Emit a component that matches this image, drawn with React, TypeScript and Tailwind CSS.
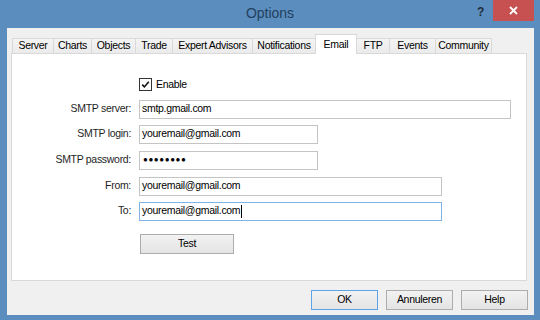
import React from "react";

type Tab = { label: string; width: string; selected?: boolean };

const tabs: Tab[] = [
  { label: "Server", width: "w-[41px]" },
  { label: "Charts", width: "w-[38px]" },
  { label: "Objects", width: "w-[44px]" },
  { label: "Trade", width: "w-[37px]" },
  { label: "Expert Advisors", width: "w-[80px]" },
  { label: "Notifications", width: "w-[63px]" },
  { label: "Email", width: "w-[42px]", selected: true },
  { label: "FTP", width: "w-[32px]" },
  { label: "Events", width: "w-[46px]" },
  { label: "Community", width: "w-[57px]" },
];

function TabStrip() {
  return (
    <div className="flex items-end h-[19px] pl-[1px]">
      {tabs.map((tab, i) => {
        const afterSelected = i > 0 && tabs[i - 1].selected;
        const isLast = i === tabs.length - 1;
        if (tab.selected) {
          return (
            <div
              key={tab.label}
              className={`${tab.width} h-[20px] -mb-px relative z-10 bg-white border-t border-l border-r border-[#d9d9d9] flex justify-center pt-[2px]`}
            >
              {tab.label}
            </div>
          );
        }
        return (
          <div
            key={tab.label}
            className={`${tab.width} h-[15px] border-t border-[#d9d9d9] bg-gradient-to-b from-[#f4f4f4] to-[#ebebeb] flex items-center justify-center ${
              afterSelected ? "" : "border-l"
            } ${isLast ? "border-r" : ""}`}
          >
            {tab.label}
          </div>
        );
      })}
    </div>
  );
}

function Field({
  label,
  width,
  value,
  focused,
  className,
}: {
  label: string;
  width: string;
  value: React.ReactNode;
  focused?: boolean;
  className?: string;
}) {
  return (
    <div className={`flex items-center ${className ?? ""}`}>
      <div className="w-[120px] text-right pr-[1px] text-[#1e1e1e]">{label}</div>
      <div
        className={`ml-[7px] ${width} h-[19px] bg-white border flex items-center pl-[2px] ${
          focused ? "border-[#7eb4ea]" : "border-[#c4c4c4]"
        }`}
      >
        {value}
      </div>
    </div>
  );
}

function DialogButton({ label, primary }: { label: string; primary?: boolean }) {
  return (
    <div
      className={`w-[67px] h-[20px] border bg-gradient-to-b from-[#f2f2f2] to-[#e4e4e4] flex items-center justify-center ${
        primary ? "border-[#5ea3e8]" : "border-[#adadad]"
      }`}
    >
      {label}
    </div>
  );
}

export default function App() {
  return (
    <div className="w-[540px] h-[320px] bg-[#5b8dbe] flex flex-col font-['Liberation_Sans',Arial,sans-serif] text-[10.5px] tracking-[-0.3px] text-black overflow-hidden">
      <div className="h-[28px] relative flex items-center justify-center">
        <span className="text-[14px] tracking-normal text-[#22415f] -mt-[1px]">Options</span>
        <span className="absolute left-[477px] top-[3px] text-[12px] font-bold text-[#1f2d3b]">?</span>
        <div className="absolute left-[493px] top-0 w-[41px] h-[21px] bg-[#c75050] flex items-center justify-center">
          <svg width="9" height="9" viewBox="0 0 9 9">
            <path d="M1 1 L8 8 M8 1 L1 8" stroke="white" strokeWidth="1.8" />
          </svg>
        </div>
      </div>

      <div className="ml-[7px] w-[527px] h-[287px] bg-[#f0f0f0] pl-[4px] pr-[7px] pt-[6px] flex flex-col">
        <TabStrip />
        <div className="w-[516px] h-[228px] bg-white border border-[#d9d9d9] flex flex-col">
          <div className="flex items-center mt-[23px] pl-[127px]">
            <div className="w-[13px] h-[13px] border border-[#333] bg-white flex items-center justify-center">
              <svg width="9" height="9" viewBox="0 0 9 9">
                <path d="M1.2 4.6 L3.4 6.9 L7.8 1.8" stroke="#111" strokeWidth="1.6" fill="none" />
              </svg>
            </div>
            <span className="ml-[4px]">Enable</span>
          </div>

          <Field className="mt-[7px]" label="SMTP server:" width="w-[372px]" value="smtp.gmail.com" />
          <Field className="mt-[6px]" label="SMTP login:" width="w-[179px]" value="youremail@gmail.com" />
          <Field
            className="mt-[7px]"
            label="SMTP password:"
            width="w-[179px]"
            value={<span className="text-[8px] tracking-[0.6px] pl-[1px]">●●●●●●●●</span>}
          />
          <Field className="mt-[7px]" label="From:" width="w-[303px]" value="youremail@gmail.com" />
          <Field
            className="mt-[6px]"
            label="To:"
            width="w-[303px]"
            focused
            value={
              <span className="flex items-center">
                youremail@gmail.com
                <span className="w-px h-[13px] bg-black ml-[1px]" />
              </span>
            }
          />

          <div className="mt-[13px] ml-[128px] w-[94px] h-[20px] border border-[#adadad] bg-gradient-to-b from-[#f2f2f2] to-[#e4e4e4] flex items-center justify-center">
            Test
          </div>
        </div>

        <div className="flex justify-end gap-[8px] mt-[9px] -mr-[1px]">
          <DialogButton label="OK" primary />
          <DialogButton label="Annuleren" />
          <DialogButton label="Help" />
        </div>
      </div>
    </div>
  );
}
